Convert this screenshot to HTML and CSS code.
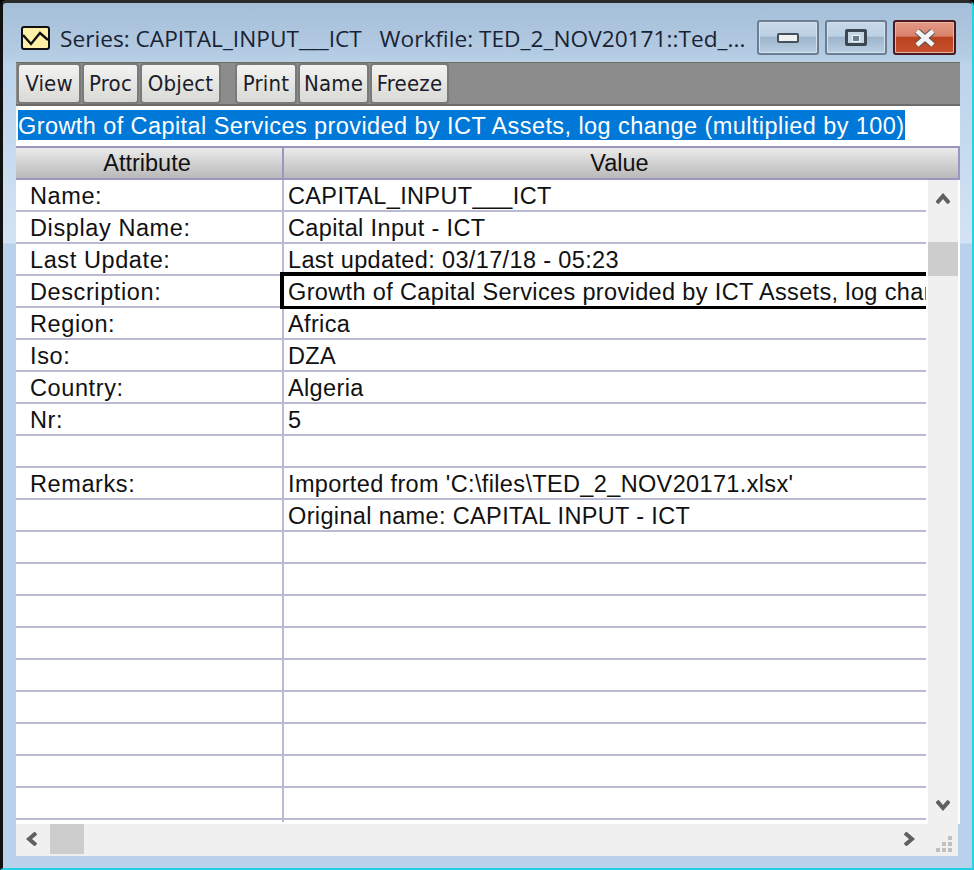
FILE: index.html
```html
<!DOCTYPE html>
<html lang="en">
<head>
<meta charset="utf-8">
<title>Series: CAPITAL_INPUT___ICT</title>
<link rel="stylesheet" href="styles.css">
</head>
<body>
<div class="window">
  <header class="titlebar">
    <svg class="app-icon" width="29" height="24" viewBox="0 0 29 24"><rect x="1" y="1" width="27" height="22" rx="2" fill="#fff2a8" stroke="#111" stroke-width="2"/><path d="M2 9 L10 18 L19 7 L27 14" fill="none" stroke="#111" stroke-width="2.4"/></svg>
    <div class="title-text">Series: CAPITAL_INPUT___ICT&nbsp;&nbsp; Workfile: TED_2_NOV20171::Ted_...</div>
    <div class="controls">
      <div class="ctl"><span class="min-glyph"></span></div>
      <div class="ctl"><span class="max-glyph"></span></div>
      <div class="ctl close"><svg width="24" height="18" viewBox="0 0 24 18"><path d="M4 2 L20 16 M20 2 L4 16" stroke="#555" stroke-width="6.5"/><path d="M4 2 L20 16 M20 2 L4 16" stroke="#f4f4f4" stroke-width="4.5"/></svg></div>
    </div>
  </header>
  <nav class="toolbar">
    <button class="tb w-view">View</button>
    <button class="tb w-proc">Proc</button>
    <button class="tb w-object">Object</button>
    <button class="tb w-print group-start">Print</button>
    <button class="tb w-name">Name</button>
    <button class="tb w-freeze">Freeze</button>
  </nav>
  <div class="desc"><span class="sel">Growth of Capital Services provided by ICT Assets, log change (multiplied by 100)</span></div>
  <div class="thead"><div class="th col-a">Attribute</div><div class="th col-v">Value</div></div>
  <div class="body">
    <div class="rows">
      <div class="row"><div class="c col-a">Name:</div><div class="c col-v">CAPITAL_INPUT___ICT</div></div>
      <div class="row"><div class="c col-a">Display Name:</div><div class="c col-v">Capital Input - ICT</div></div>
      <div class="row"><div class="c col-a">Last Update:</div><div class="c col-v">Last updated: 03/17/18 - 05:23</div></div>
      <div class="row"><div class="c col-a">Description:</div><div class="c col-v focus">Growth of Capital Services provided by ICT Assets, log change (multiplied by 100)</div></div>
      <div class="row"><div class="c col-a">Region:</div><div class="c col-v">Africa</div></div>
      <div class="row"><div class="c col-a">Iso:</div><div class="c col-v">DZA</div></div>
      <div class="row"><div class="c col-a">Country:</div><div class="c col-v">Algeria</div></div>
      <div class="row"><div class="c col-a">Nr:</div><div class="c col-v">5</div></div>
      <div class="row"><div class="c col-a"></div><div class="c col-v"></div></div>
      <div class="row"><div class="c col-a">Remarks:</div><div class="c col-v">Imported from 'C:\files\TED_2_NOV20171.xlsx'</div></div>
      <div class="row"><div class="c col-a"></div><div class="c col-v">Original name: CAPITAL INPUT - ICT</div></div>
      <div class="row"><div class="c col-a"></div><div class="c col-v"></div></div>
      <div class="row"><div class="c col-a"></div><div class="c col-v"></div></div>
      <div class="row"><div class="c col-a"></div><div class="c col-v"></div></div>
      <div class="row"><div class="c col-a"></div><div class="c col-v"></div></div>
      <div class="row"><div class="c col-a"></div><div class="c col-v"></div></div>
      <div class="row"><div class="c col-a"></div><div class="c col-v"></div></div>
      <div class="row"><div class="c col-a"></div><div class="c col-v"></div></div>
      <div class="row"><div class="c col-a"></div><div class="c col-v"></div></div>
      <div class="row"><div class="c col-a"></div><div class="c col-v"></div></div>
    </div>
    <div class="vbar">
      <svg class="arrow" width="14" height="12" viewBox="0 0 14 12"><path d="M1 10 L7 3 L13 10" fill="none" stroke="#606060" stroke-width="4"/></svg>
      <div class="vthumb"></div>
      <svg class="arrow" width="14" height="12" viewBox="0 0 14 12"><path d="M1 2 L7 9 L13 2" fill="none" stroke="#606060" stroke-width="4"/></svg>
    </div>
  </div>
  <div class="hbar">
    <svg class="harrow" width="12" height="14" viewBox="0 0 12 14"><path d="M10 1 L3 7 L10 13" fill="none" stroke="#606060" stroke-width="4"/></svg>
    <div class="hthumb"></div>
    <svg class="harrow push" width="12" height="14" viewBox="0 0 12 14"><path d="M2 1 L9 7 L2 13" fill="none" stroke="#606060" stroke-width="4"/></svg>
    <svg class="grip" width="18" height="18" viewBox="0 0 18 18" fill="#c0c0c0"><rect x="12" y="0" width="4" height="4"/><rect x="6" y="6" width="4" height="4"/><rect x="12" y="6" width="4" height="4"/><rect x="0" y="12" width="4" height="4"/><rect x="6" y="12" width="4" height="4"/><rect x="12" y="12" width="4" height="4"/></svg>
  </div>
</div>
</body>
</html>
```
FILE: styles.css
```css
* { box-sizing: border-box; }
html, body { margin: 0; padding: 0; }
body { width: 974px; height: 870px; overflow: hidden; background: #000; font-family: "Liberation Sans", Arial, sans-serif; color: #111; }

.window {
  width: 974px; height: 870px;
  display: flex; flex-direction: column;
  padding: 0 12px 12px 13px;
  border-top: 3px solid #2b2b2b;
  border-left: 3px solid #111;
  border-right: 2px solid #2ccfe4;
  border-bottom: 2px solid #22cfe2;
  border-radius: 6px 6px 0 0;
  background: linear-gradient(180deg, #a5bfd8 0, #b3cbe3 50px, #bcd3ea 62px, #d3e3f3 240px, #b9d1ea 241px, #b9d1ea 100%);
}

.titlebar { height: 59px; flex: none; display: flex; align-items: flex-start; padding-left: 5px; }
.app-icon { margin-top: 23px; flex: none; }
.title-text { margin-left: 10px; margin-top: 22px; width: 697px; flex: none; font-family: "Open Sans", "Liberation Sans", sans-serif; font-size: 22.7px; line-height: 28px; white-space: nowrap; color: #1a2333; }
.controls { display: flex; gap: 6px; margin-top: 17px; flex: none; }
.ctl {
  width: 62px; height: 35px; border: 2px solid #6c7f92; border-radius: 3px;
  box-shadow: inset 0 0 0 1px #d3e1ee;
  background: linear-gradient(180deg, #c6d9eb 0, #bcd0e4 45%, #9db5cb 50%, #b9cfe3 100%);
  display: flex; align-items: center; justify-content: center;
}
.close { width: 63px; border-color: #4a1a20; background: linear-gradient(180deg, #e49a87 0, #d9826b 45%, #bb4320 50%, #c6512d 100%); box-shadow: inset 0 0 0 1px #eab5a5; }
.min-glyph { width: 22px; height: 10px; background: #f1f1f1; border: 2px solid #44505c; border-radius: 2px; }
.max-glyph { width: 22px; height: 17px; background: #c6d7e6; border: 3px solid #3d4751; border-radius: 2px; position: relative; }
.max-glyph::after { content: ""; position: absolute; left: 4px; right: 4px; top: 3px; height: 5px; background: #6c7f90; border: 1px solid #f0f0f0; }

.toolbar { height: 44px; flex: none; display: flex; gap: 1px; padding: 0 0 0 1px; background: #8c8c8c; border-top: 1px solid #68705f; border-bottom: 2px solid #6c6c6c; }
.tb {
  height: 41px; padding: 0; border: 2px solid #7a7a7a; border-radius: 4px;
  background: linear-gradient(180deg, #f3f3f1 0, #d9dad6 100%);
  font: 22px "DejaVu Sans Condensed", "DejaVu Sans", sans-serif; letter-spacing: .2px; color: #1c1c2a;
  display: flex; align-items: center; justify-content: center;
}
.w-view { width: 64px; }
.w-proc { width: 57px; }
.w-object { width: 81px; }
.w-print { width: 62px; }
.w-name { width: 71px; }
.w-freeze { width: 79px; }
.group-start { margin-left: 13px; }

.desc { height: 40px; flex: none; background: #fff; padding: 4px 0 0 2px; font-size: 23.5px; line-height: 30px; white-space: nowrap; }
.sel { display: inline-block; background: #0078d7; color: #fff; height: 30px; line-height: 32px; letter-spacing: .42px; }

.thead { height: 34px; flex: none; display: flex; border-top: 2px solid #9a96bd; border-bottom: 2px solid #9a96bd; border-right: 2px solid #9a96bd; background: linear-gradient(180deg, #ebebeb 0, #b9b9b9 100%); }
.th { font-size: 23.5px; line-height: 30px; text-align: center; }
.thead .col-a { width: 268px; padding-right: 4px; border-right: 2px solid #9a96bd; flex: none; }
.thead .col-v { flex: 1; padding-right: 3px; }

.body { flex: 1; min-height: 0; display: flex; background: #fff; }
.rows { width: 910px; flex: none; background: linear-gradient(#b9bbd2, #b9bbd2) 266px 0 / 2px 642px no-repeat; }
.row { height: 32px; display: flex; border-bottom: 2px solid #b9bbd2; }
.c { font-size: 23.5px; line-height: 30px; padding-top: 1px; white-space: nowrap; overflow: hidden; }
.row .col-a { width: 268px; flex: none; padding-left: 14px; border-right: 2px solid #b9bbd2; letter-spacing: .6px; }
.row .col-v { flex: 1; min-width: 0; padding-left: 4px; letter-spacing: .36px; }
.row .focus { position: relative; overflow: visible; clip-path: inset(-5px 0 -5px -5px); }
.focus::before { content: ""; position: absolute; left: -4px; top: -4px; right: 0; bottom: -3px; border: 4px solid #000; border-right: 0; border-bottom-width: 3px; }
.vbar { width: 30px; margin-left: 2px; flex: none; background: #f0f0f0; position: relative; display: flex; flex-direction: column; align-items: center; }
.arrow { position: absolute; }
.arrow:first-child { top: 13px; }
.arrow:last-child { bottom: 13px; }
.vthumb { position: absolute; top: 62px; left: 0; right: 0; height: 34px; background: #cdcdcd; }

.hbar { height: 32px; flex: none; background: #f0f0f0; display: flex; align-items: flex-start; width: 942px; margin-right: 2px; }
.harrow { margin-top: 8px; flex: none; }
.harrow:first-child { margin-left: 10px; }
.hthumb { width: 34px; height: 30px; margin-left: 12px; background: #cdcdcd; flex: none; }
.push { margin-left: auto; }
.grip { margin: 12px 4px 0 21px; flex: none; }
```
